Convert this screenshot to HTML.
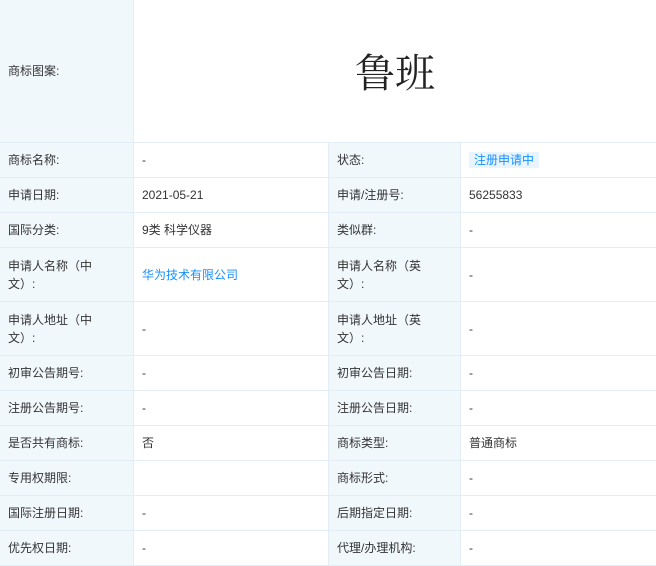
<!DOCTYPE html>
<html><head><meta charset="utf-8"><style>
body{margin:0;width:656px;height:561px;overflow:hidden;background:#fff;font-family:"Liberation Sans","Noto Sans CJK SC",sans-serif;font-size:12px;color:#333}
table{border-collapse:collapse;table-layout:fixed;width:657px;position:absolute;left:-1px;top:-1px}
td{border:1px solid #e3edf5;padding:0 16px 0 8px;vertical-align:middle;line-height:18px}
td.l{background:#f1f8fc}
.tag{background:#e8f4ff;color:#1890ff;padding:1px 5px}
a{color:#1890ff;text-decoration:none}
</style></head><body>
<table>
<colgroup><col style="width:134px"><col style="width:195px"><col style="width:132px"><col style="width:196px"></colgroup>
<tr style="height:143px"><td class="l">商标图案:</td><td colspan="3" style="text-align:center;padding:0;font-family:'Noto Serif CJK SC',serif;font-size:40px;color:#222">鲁班</td></tr>
<tr style="height:35px"><td class="l">商标名称:</td><td>-</td><td class="l">状态:</td><td><span class="tag">注册申请中</span></td></tr>
<tr style="height:35px"><td class="l">申请日期:</td><td>2021-05-21</td><td class="l">申请/注册号:</td><td>56255833</td></tr>
<tr style="height:35px"><td class="l">国际分类:</td><td>9类 科学仪器</td><td class="l">类似群:</td><td>-</td></tr>
<tr style="height:54px"><td class="l">申请人名称（中文）:</td><td><a>华为技术有限公司</a></td><td class="l">申请人名称（英文）:</td><td>-</td></tr>
<tr style="height:54px"><td class="l">申请人地址（中文）:</td><td>-</td><td class="l">申请人地址（英文）:</td><td>-</td></tr>
<tr style="height:35px"><td class="l">初审公告期号:</td><td>-</td><td class="l">初审公告日期:</td><td>-</td></tr>
<tr style="height:35px"><td class="l">注册公告期号:</td><td>-</td><td class="l">注册公告日期:</td><td>-</td></tr>
<tr style="height:35px"><td class="l">是否共有商标:</td><td>否</td><td class="l">商标类型:</td><td>普通商标</td></tr>
<tr style="height:35px"><td class="l">专用权期限:</td><td></td><td class="l">商标形式:</td><td>-</td></tr>
<tr style="height:35px"><td class="l">国际注册日期:</td><td>-</td><td class="l">后期指定日期:</td><td>-</td></tr>
<tr style="height:35px"><td class="l">优先权日期:</td><td>-</td><td class="l">代理/办理机构:</td><td>-</td></tr>
</table>
</body></html>
